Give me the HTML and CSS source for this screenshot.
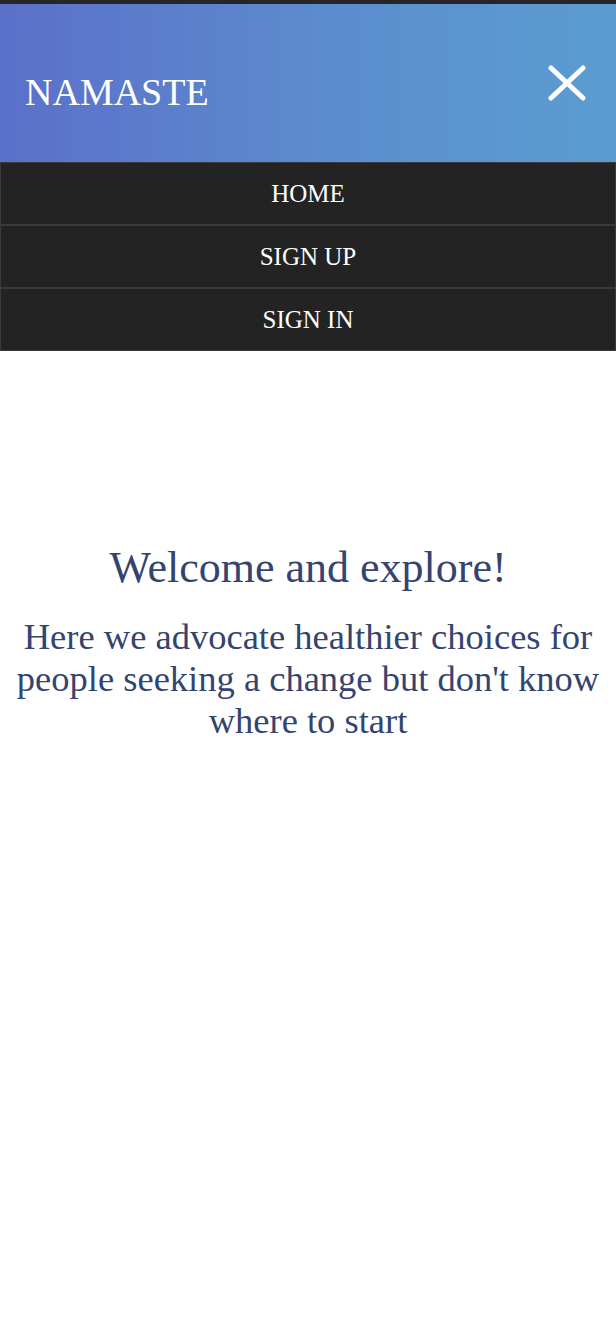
FILE: index.html
```html
<!DOCTYPE html>
<html lang="en">
<head>
<meta charset="utf-8">
<title>Namaste</title>
<link rel="stylesheet" href="styles.css">
</head>
<body>
<div class="topbar"></div>
<header class="header">
  <div class="brand">NAMASTE</div>
  <button class="close" aria-label="Close menu">
    <svg width="38" height="36" viewBox="0 0 38 36"><path d="M3 3 L35 33 M35 3 L3 33" stroke="#fff" stroke-width="5" stroke-linecap="round" fill="none"/></svg>
  </button>
</header>
<nav class="menu">
  <a class="item" href="#">HOME</a>
  <a class="item" href="#">SIGN UP</a>
  <a class="item" href="#">SIGN IN</a>
</nav>
<main class="hero">
  <h1 class="title">Welcome and explore!</h1>
  <p class="lead">Here we advocate healthier choices for people seeking a change but don't know where to start</p>
</main>
</body>
</html>
```
FILE: styles.css
```css
* { box-sizing: border-box; }
html, body { margin: 0; padding: 0; background: #fff; }
body { font-family: "Liberation Serif", "Times New Roman", serif; }
.topbar { height: 4px; background: #26262a; }
.header {
  height: 158px;
  background: linear-gradient(90deg, #5b70c9 0%, #5c8fcf 60%, #5a9dd1 100%);
  display: flex;
  align-items: center;
  justify-content: space-between;
  padding: 0 30px 0 25px;
}
.brand { color: #fff; font-size: 38px; line-height: 1; padding-top: 18px; }
.close { background: none; border: 0; padding: 0; display: flex; cursor: pointer; }
.menu { display: flex; flex-direction: column; }
.item {
  display: flex;
  align-items: center;
  justify-content: center;
  height: 63px;
  background: #232323;
  border: 1px solid #3a3a3a;
  color: #fff;
  text-decoration: none;
  font-size: 25px;
}
.hero { text-align: center; color: #344470; padding: 192px 8px 0; }
.title { font-size: 44px; font-weight: normal; margin: 0 0 22px; line-height: 1.15; }
.lead { font-size: 36.5px; margin: 0 auto; line-height: 42px; }
```
